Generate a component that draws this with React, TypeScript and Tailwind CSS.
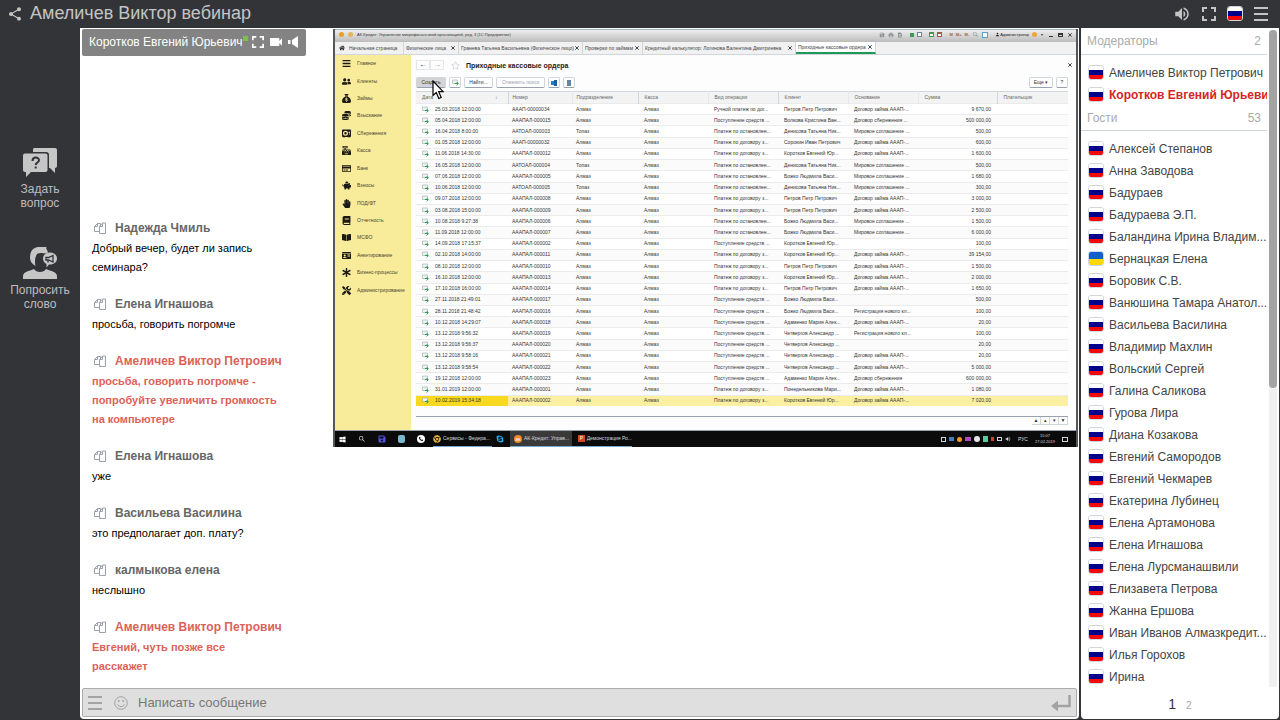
import React from 'react';
import { MdShare, MdVolumeUp, MdVideocam, MdPrint, MdSave, MdFindInPage, MdSearch, MdPerson } from 'react-icons/md';
import {
  FaBars, FaUserFriends, FaCoins, FaCashRegister, FaRegCreditCard, FaPiggyBank,
  FaHandPaper, FaBook, FaBookOpen, FaIdCard, FaAsterisk, FaTools, FaWindows, FaSkype,
  FaSave, FaChrome, FaPhoneAlt, FaRegStar, FaHome,
} from 'react-icons/fa';
import { FaSackDollar, FaVault } from 'react-icons/fa6';

interface Guest {
  name: string;
  flag?: 'ru' | 'ua';
}

interface Message {
  author: string;
  text: string;
  moderator?: boolean;
}

const MESSAGES: Message[] = [
  { author: 'Надежда Чмиль', text: 'Добрый вечер, будет ли запись семинара?' },
  { author: 'Елена Игнашова', text: 'просьба, говорить погромче' },
  { author: 'Амеличев Виктор Петрович', text: 'просьба, говорить погромче - попробуйте увеличить громкость на компьютере', moderator: true },
  { author: 'Елена Игнашова', text: 'уже' },
  { author: 'Васильева Василина', text: 'это предполагает доп. плату?' },
  { author: 'калмыкова елена', text: 'неслышно' },
  { author: 'Амеличев Виктор Петрович', text: 'Евгений, чуть позже все расскажет', moderator: true },
];

const GUESTS: Guest[] = [
  { name: 'Алексей Степанов' },
  { name: 'Анна Заводова' },
  { name: 'Бадураев' },
  { name: 'Бадураева Э.П.' },
  { name: 'Баландина Ирина Владим...' },
  { name: 'Бернацкая Елена', flag: 'ua' },
  { name: 'Боровик С.В.' },
  { name: 'Ванюшина Тамара Анатол...' },
  { name: 'Васильева Василина' },
  { name: 'Владимир Махлин' },
  { name: 'Вольский Сергей' },
  { name: 'Галина Саликова' },
  { name: 'Гурова Лира' },
  { name: 'Диана Козакова' },
  { name: 'Евгений Самородов' },
  { name: 'Евгений Чекмарев' },
  { name: 'Екатерина Лубинец' },
  { name: 'Елена Артамонова' },
  { name: 'Елена Игнашова' },
  { name: 'Елена Лурсманашвили' },
  { name: 'Елизавета Петрова' },
  { name: 'Жанна Ершова' },
  { name: 'Иван Иванов Алмазкредит...' },
  { name: 'Илья Горохов' },
  { name: 'Ирина' },
];

const SECTIONS = [
  { label: 'Главное', icon: FaBars },
  { label: 'Клиенты', icon: FaUserFriends },
  { label: 'Займы', icon: FaSackDollar },
  { label: 'Взыскание', icon: FaCoins },
  { label: 'Сбережения', icon: FaVault },
  { label: 'Касса', icon: FaCashRegister },
  { label: 'Банк', icon: FaRegCreditCard },
  { label: 'Взносы', icon: FaPiggyBank },
  { label: 'ПОД/ФТ', icon: FaHandPaper },
  { label: 'Отчетность', icon: FaBook },
  { label: 'МСФО', icon: FaBookOpen },
  { label: 'Анкетирование', icon: FaIdCard },
  { label: 'Бизнес-процессы', icon: FaAsterisk },
  { label: 'Администрирование', icon: FaTools },
];

const TABS = [
  { label: 'Физические лица', width: 'w-[55px]' },
  { label: 'Гранева Татьяна Васильевна (Физическое лицо)', width: 'w-[124px]' },
  { label: 'Проверки по займам', width: 'w-[60px]' },
  { label: 'Кредитный калькулятор: Логинова Валентина Дмитриевна', width: 'w-[153px]' },
  { label: 'Приходные кассовые ордера', width: 'w-[80px]', active: true },
];

const STOPPED = 'Платеж по остановлен...';
const CONTRACT = 'Платеж по договору з...';
const INCOME = 'Поступление средств ...';
const LOAN = 'Договор займа АААП-...';
const PEACE = 'Мировое соглашение ...';
const REGISTRATION = 'Регистрация нового кл...';
const PETROV = 'Петров Петр Петрович';
const DENISOVA = 'Денисова Татьяна Ник...';
const KOROTKOV = 'Коротков Евгений Юр...';
const BOZHKO = 'Божко Людмила Васи...';
const CHETVERGOV = 'Четвергов Александр ...';
const ADAMENKO = 'Адаменко Мария Алек...';

// date, number, department, operation, client, reason, sum
const ORDERS: string[][] = [
  ['25.03.2018 12:00:00', 'АААП-00000034', 'Алмаз', 'Ручной платеж по дог...', PETROV, LOAN, '9 670,00'],
  ['05.04.2018 12:00:00', 'АААПАЛ-000015', 'Алмаз', INCOME, 'Волкова Кристина Ван...', 'Договор сбережения ...', '500 000,00'],
  ['16.04.2018 8:00:00', 'ААТОАЛ-000003', 'Топаз', STOPPED, DENISOVA, PEACE, '500,00'],
  ['01.05.2018 12:00:00', 'АААП-00000032', 'Алмаз', CONTRACT, 'Сорокин Иван Петрович', LOAN, '600,00'],
  ['11.06.2018 14:30:00', 'АААПАЛ-000012', 'Алмаз', CONTRACT, KOROTKOV, LOAN, '1 600,00'],
  ['16.05.2018 12:00:00', 'ААТОАЛ-000004', 'Топаз', STOPPED, DENISOVA, PEACE, '500,00'],
  ['07.06.2018 12:00:00', 'АААПАЛ-000005', 'Алмаз', STOPPED, BOZHKO, PEACE, '1 680,00'],
  ['10.06.2018 12:00:00', 'ААТОАЛ-000005', 'Топаз', STOPPED, DENISOVA, PEACE, '300,00'],
  ['09.07.2018 12:00:00', 'АААПАЛ-000008', 'Алмаз', CONTRACT, PETROV, LOAN, '3 000,00'],
  ['03.08.2018 15:00:00', 'АААПАЛ-000009', 'Алмаз', CONTRACT, PETROV, LOAN, '2 500,00'],
  ['10.08.2018 9:27:38', 'АААПАЛ-000006', 'Алмаз', STOPPED, BOZHKO, PEACE, '1 500,00'],
  ['11.09.2018 12:00:00', 'АААПАЛ-000007', 'Алмаз', STOPPED, BOZHKO, PEACE, '6 000,00'],
  ['14.09.2018 17:15:37', 'АААПАЛ-000002', 'Алмаз', INCOME, KOROTKOV, '', '100,00'],
  ['02.10.2018 14:00:00', 'АААПАЛ-000011', 'Алмаз', CONTRACT, KOROTKOV, LOAN, '39 154,00'],
  ['08.10.2018 12:00:00', 'АААПАЛ-000010', 'Алмаз', CONTRACT, PETROV, LOAN, '1 500,00'],
  ['16.10.2018 12:00:00', 'АААПАЛ-000013', 'Алмаз', CONTRACT, KOROTKOV, LOAN, '2 000,00'],
  ['17.10.2018 16:00:00', 'АААПАЛ-000014', 'Алмаз', CONTRACT, PETROV, LOAN, '1 650,00'],
  ['27.11.2018 21:49:01', 'АААПАЛ-000017', 'Алмаз', INCOME, BOZHKO, '', '500,00'],
  ['28.11.2018 21:48:42', 'АААПАЛ-000016', 'Алмаз', INCOME, BOZHKO, REGISTRATION, '100,00'],
  ['10.12.2018 14:29:07', 'АААПАЛ-000018', 'Алмаз', INCOME, ADAMENKO, LOAN, '20,00'],
  ['13.12.2018 9:56:32', 'АААПАЛ-000019', 'Алмаз', INCOME, CHETVERGOV, REGISTRATION, '100,00'],
  ['13.12.2018 9:56:37', 'АААПАЛ-000020', 'Алмаз', INCOME, CHETVERGOV, '', '20,00'],
  ['13.12.2018 9:58:16', 'АААПАЛ-000021', 'Алмаз', INCOME, CHETVERGOV, LOAN, '20,00'],
  ['13.12.2018 9:58:54', 'АААПАЛ-000022', 'Алмаз', INCOME, CHETVERGOV, LOAN, '5 000,00'],
  ['19.12.2018 12:00:00', 'АААПАЛ-000023', 'Алмаз', INCOME, ADAMENKO, 'Договор сбережения', '600 000,00'],
  ['31.01.2019 12:00:00', 'АААПАЛ-000001', 'Алмаз', CONTRACT, 'Понедельникова Мари...', LOAN, '1 080,00'],
  ['10.02.2019 15:34:18', 'АААПАЛ-000002', 'Алмаз', CONTRACT, KOROTKOV, LOAN, '7 020,00'],
];

const Flag: React.FC<{ country?: 'ru' | 'ua' }> = ({ country = 'ru' }) => (
  <span className={`block w-4 h-[15px] mb-px shrink-0 rounded-[3px] overflow-hidden border ${country === 'ru' ? 'border-gray-300' : 'border-[#3a78c0]/30'}`}>
    <svg viewBox="0 0 14 13" className="block w-full h-full" preserveAspectRatio="none">
      {country === 'ru' ? (
        <>
          <rect width="14" height="4" fill="#fff" />
          <rect y="4" width="14" height="5" fill="#00008b" />
          <rect y="9" width="14" height="4" fill="#f20808" />
        </>
      ) : (
        <>
          <rect width="14" height="7" fill="#1560c8" />
          <rect y="7" width="14" height="6" fill="#ffd800" />
        </>
      )}
    </svg>
  </span>
);

const ExpandIcon: React.FC<{ className: string }> = ({ className }) => (
  <svg viewBox="0 0 14 14" className={className} fill="none" stroke="currentColor" strokeWidth="2">
    <path d="M1 5V1h4M9 1h4v4M13 9v4H9M5 13H1V9" />
  </svg>
);

const MenuIcon: React.FC<{ className: string }> = ({ className }) => (
  <svg viewBox="0 0 14 14" className={className} fill="currentColor">
    <path d="M0 0h14v2H0zM0 6h14v2H0zM0 12h14v2H0z" />
  </svg>
);

const CopyIcon = () => (
  <svg viewBox="0 0 12 12" className="w-3 h-3 text-gray-400" fill="none" stroke="currentColor" strokeWidth="1">
    <path d="M5 9.500H.5v-5l3-3h3v2.500M3.500 1.500v3h-3M5.500 11.500v-7l3-3.500h3v10.500zM8.500 1v3.500h-3" />
  </svg>
);

const QuestionIcon = () => (
  <svg viewBox="0 0 34 29" className="w-[34px] h-[29px]" fill="#c6c6c6">
    <path d="M11 0h21a2 2 0 0 1 2 2v16a2 2 0 0 1-2 2v5l-5-5h-1V7a3 3 0 0 0-3-3H10V1z" />
    <path d="M2 5.500h20.500a2 2 0 0 1 2 2V22a2 2 0 0 1-2 2H8l-5 5v-5H2a2 2 0 0 1-2-2V7.500a2 2 0 0 1 2-2z" />
    <path d="M9.500 13c0-4.500 6.500-4.300 6.500-.8 0 2.300-3.300 2.300-3.300 4.800M12.700 18.500v2" fill="none" stroke="#333438" strokeWidth="2" />
  </svg>
);

const SpeakerIcon = () => (
  <svg viewBox="0 0 34 32" className="w-[34px] h-8" fill="#c6c6c6">
    <path d="M7 11C7 3 11 0 16.500 0h7c-1 2 1 3 1.500 5.500l-2 1c-4-1-7-.5-9 .5-2 3-2.500 8-1.500 12C9 17 7 14 7 11z" />
    <path d="M0 32v-3c0-4 6-5 11-7 2 4 10 4 12 0 5 2 11 3 11 7v3z" />
    <path d="M27 5.500c4 0 7 2.500 7 6s-3 6-7 6h-1l-2.500 3v-3.500c-2.200-1-3.500-3-3.500-5.500 0-3.500 3-6 7-6z" />
    <path d="M23 10.500h2.500l4.500-2v6.500l-4.500-2H23zM25 13v2.500" fill="none" stroke="#333438" strokeWidth="1.300" />
  </svg>
);

const CloseMark = () => (
  <svg viewBox="0 0 4 4" className="w-1 h-1 shrink-0" fill="none" stroke="#444">
    <path d="M.3.3l3.400 3.400M3.700.3L.3 3.700" />
  </svg>
);

const DocIcon = () => (
  <svg viewBox="0 0 7 7" className="w-[7px] h-[7px] block">
    <path d="M.5 1h5v3.500h-5z" fill="#eef2f4" stroke="#9aa7ad" strokeWidth=".6" />
    <path d="M3 4.500h3M4.700 3l1.600 1.800-1.600 1.700" fill="none" stroke="#2f9e4c" strokeWidth="1" />
  </svg>
);

const ToolButton: React.FC<{ className?: string; label?: string; children?: React.ReactNode }> = ({ className = 'bg-white', label, children }) => (
  <button aria-label={label} className={`h-[11px] flex items-center justify-center whitespace-nowrap rounded-xs border border-gray-300 border-b-gray-400 ${className}`}>
    {children}
  </button>
);

const TopBar = () => (
  <header className="h-7 shrink-0 flex items-center pl-[7px] pr-3 text-[#c4c4c4]">
    <button aria-label="Поделиться"><MdShare className="w-4 h-4" /></button>
    <h1 className="ml-[7px] -mt-[3px] text-[18px] leading-6 whitespace-nowrap">Амеличев Виктор вебинар</h1>
    <div className="ml-auto flex items-center gap-[11px]">
      <button aria-label="Звук"><MdVolumeUp className="w-[18px] h-[18px]" /></button>
      <button aria-label="Во весь экран"><ExpandIcon className="w-3.5 h-3.5" /></button>
      <button aria-label="Язык"><Flag /></button>
      <button aria-label="Меню"><MenuIcon className="w-3.5 h-3.5" /></button>
    </div>
  </header>
);

const LeftRail = () => (
  <nav className="w-20 shrink-0 flex flex-col items-center gap-[37px] pt-[120px] text-xs leading-[14px] text-[#bdbdbd]">
    <button className="flex flex-col items-center gap-[5px]">
      <QuestionIcon />
      <span>Задать<br />вопрос</span>
    </button>
    <button className="flex flex-col items-center gap-1">
      <SpeakerIcon />
      <span>Попросить<br />слово</span>
    </button>
  </nav>
);

const Speaker = () => (
  <div className="mt-px ml-0.5 w-56 h-[27px] shrink-0 flex items-center rounded-xs bg-[#838383] pb-0.5 pl-[7px] text-xs text-white">
    <span className="whitespace-nowrap">Коротков Евгений Юрьевич</span>
    <span className="w-[5px] h-[5px] mb-1.5 shrink-0 bg-[#7cc242]" />
    <div className="ml-1 flex items-center gap-1">
      <button aria-label="Развернуть"><ExpandIcon className="w-3 h-3" /></button>
      <button aria-label="Камера"><MdVideocam className="w-4 h-4" /></button>
      <button aria-label="Громкость">
        <svg viewBox="0 0 10 12" className="w-2.5 h-3" fill="currentColor">
          <path d="M10 0v12L4 8V4zM0 4h2.500v4H0z" />
        </svg>
      </button>
    </div>
  </div>
);

const Chat = () => (
  <section className="w-[253px] shrink-0 flex flex-col">
    <Speaker />
    <div className="flex-1 min-h-0 overflow-hidden flex flex-col justify-end gap-[18px] px-3 pb-3">
      {MESSAGES.map((m, idx) => (
        <article key={idx} className={m.moderator ? 'text-[#dc6259] font-bold' : 'text-black'}>
          <h3 className={`h-5 flex items-center gap-[9px] pl-0.5 pb-0.5 text-xs font-bold whitespace-nowrap ${m.moderator ? '' : 'text-[#666]'}`}>
            <button aria-label="Копировать"><CopyIcon /></button>
            <span>{m.author}</span>
          </h3>
          <p className="w-[190px] text-[11px] leading-[19px]">{m.text}</p>
        </article>
      ))}
    </div>
  </section>
);

const WindowTitle = () => (
  <div className="h-[13px] flex items-center border-t border-[#9fb4bd] bg-linear-to-b from-[#eeeeee] to-[#bcbcbc] px-1 pb-[3px] gap-1 text-[4px] text-[#333]">
    <span className="w-[5px] h-[5px] rounded-full bg-[#e8a020]" />
    <span className="w-[5px] h-[5px] rounded-full bg-[#e3b458]" />
    <span className="whitespace-nowrap">АК-Кредит: Управление микрофинансовой организацией, ред. 3 (1С:Предприятие)</span>
    <div className="ml-auto flex items-center gap-[3px] text-[#8b8f94]">
      <MdSave className="w-1.5 h-1.5" />
      <MdPrint className="w-1.5 h-1.5" />
      <MdFindInPage className="w-1.5 h-1.5" />
      <span className="w-1 h-1 ml-1 bg-[#3c9a55]" />
      <span className="w-[5px] h-[5px] border border-[#6d8795] bg-white" />
      <span className="w-[5px] h-[5px] ml-1 border border-t-2 border-[#3c9a55] bg-white" />
      <span className="w-[5px] h-[5px] border border-t-2 border-[#a7583c] bg-white" />
      <span className="ml-1 font-bold text-[#a0603c]">M</span>
      <span className="font-bold text-[#a0603c]">M+</span>
      <span className="font-bold text-[#a0603c]">M-</span>
      <MdSearch className="w-[7px] h-[7px]" />
      <span className="w-1.5 h-1.5 border border-[#5c9fc9] bg-white" />
      <span className="ml-1 flex items-center text-[#222]"><MdPerson className="w-[5px] h-[5px]" />Администратор</span>
      <span className="w-[5px] h-[5px] rounded-full bg-[#eda73a]" />
      <span className="w-1 text-center leading-none text-[#333]">▾</span>
      <span className="w-1 h-px mt-1 mx-0.5 bg-[#333]" />
      <span className="w-[5px] h-1 border border-t-2 border-[#333]" />
      <span className="ml-0.5"><CloseMark /></span>
    </div>
  </div>
);

const WindowTabs = () => (
  <div className="h-[13px] flex border-b border-gray-300 bg-[#f1f1f1] text-[#444]">
    <button className="w-[69px] flex items-center gap-1 pl-1 border-r border-gray-300 whitespace-nowrap">
      <FaHome className="w-1.5 h-1.5 text-[#333]" />
      Начальная страница
    </button>
    {TABS.map(tab => (
      <button
        key={tab.label}
        className={`${tab.width} flex items-center justify-between pl-0.5 pr-[3px] border-r border-gray-300 whitespace-nowrap ${tab.active ? 'bg-white border-b-2 border-b-[#1d9a58]' : ''}`}
      >
        <span>{tab.label}</span>
        <CloseMark />
      </button>
    ))}
  </div>
);

const SectionList = () => (
  <nav className="w-[76px] shrink-0 bg-[#f8eb9a] text-[#4a4634]">
    <div className="h-[244px] flex flex-col">
      {SECTIONS.map(({ label, icon: Icon }) => (
        <button key={label} className="flex-1 min-h-0 flex items-center gap-1.5 pl-[7px] whitespace-nowrap">
          <Icon className="w-[9px] h-[9px] shrink-0 text-[#1c1a12]" />
          {label}
        </button>
      ))}
    </div>
  </nav>
);

const OrdersTable = () => (
  <table className="w-full h-[315px] table-fixed border-collapse text-left whitespace-nowrap">
    <thead>
      <tr className="h-3 bg-[#f3f3f3] border-t border-gray-300 text-[#666]">
        <th className="w-[92px] font-normal pl-1.5 border-r border-gray-300">
          <span className="flex justify-between pr-2.5"><span>Дата</span><span>↓</span></span>
        </th>
        <th className="w-16 font-normal pl-1 border-r border-gray-200">Номер</th>
        <th className="w-[66px] font-normal pl-1 border-r border-gray-300">Подразделение</th>
        <th className="w-[70px] font-normal pl-1.5 border-r border-gray-200">Касса</th>
        <th className="w-[70px] font-normal pl-1.5 border-r border-gray-300">Вид операции</th>
        <th className="w-[70px] font-normal pl-1.5 border-r border-gray-200">Клиент</th>
        <th className="w-[70px] font-normal pl-1.5 border-r border-gray-200">Основание</th>
        <th className="w-[79px] font-normal pl-1.5 border-r border-gray-300">Сумма</th>
        <th className="font-normal pl-1.5">Плательщик</th>
      </tr>
    </thead>
    <tbody>
      {ORDERS.map(([date, number, department, operation, client, reason, sum], idx) => {
        const selected = idx === ORDERS.length - 1;
        return (
          <tr key={idx} className={`border-t border-[#ebebeb] ${selected ? 'bg-[#fbf0a2]' : idx % 2 ? 'bg-[#fbfbfb]' : 'bg-white'}`}>
            <td className={`pl-1.5 ${selected ? 'bg-[#f9d91f]' : ''}`}>
              <span className="flex items-center gap-1.5"><DocIcon />{date}</span>
            </td>
            <td className="pl-1">{number}</td>
            <td className="pl-1">{department}</td>
            <td className="pl-1.5">Алмаз</td>
            <td className="pl-1.5">{operation}</td>
            <td className="pl-1.5">{client}</td>
            <td className="pl-1.5">{reason}</td>
            <td className="pr-1.5 text-right">{sum}</td>
            <td></td>
          </tr>
        );
      })}
    </tbody>
  </table>
);

const OrdersForm = () => (
  <div className="flex-1 min-w-0 bg-[#fdfdfd] pl-[5px] pr-2 pt-[3px] pb-[5px] text-[#333]">
    <div className="h-3.5 flex items-center text-[#444]">
      <button aria-label="Назад" className="w-3.5 h-2.5 border border-gray-200 text-[8px] leading-none">←</button>
      <button aria-label="Вперед" className="w-3.5 h-2.5 border border-gray-200 text-[8px] leading-none text-gray-400">→</button>
      <FaRegStar className="w-[9px] h-[9px] ml-[7px] text-gray-300" />
      <h2 className="ml-1.5 text-[7px] leading-none font-bold text-[#222] whitespace-nowrap">Приходные кассовые ордера</h2>
      <button aria-label="Закрыть" className="ml-auto -mr-1"><CloseMark /></button>
    </div>
    <div className="mt-[5px] mb-[3px] flex items-center gap-[3px]">
      <div className="relative">
        <ToolButton className="w-[30px] bg-[#d4d4d4]">Создать</ToolButton>
        <svg viewBox="0 0 12 20" className="absolute left-4 top-[3px] w-3 h-5" fill="#fff" stroke="#000" strokeWidth="1.200">
          <path d="M1 1v14.500l3.300-3 2.500 6 2.400-1-2.500-5.800h4.500z" />
        </svg>
      </div>
      <ToolButton label="Создать копированием" className="w-3 bg-white"><DocIcon /></ToolButton>
      <ToolButton className="w-[29px] bg-white">Найти...</ToolButton>
      <ToolButton className="w-[49px] bg-white text-gray-400">Отменить поиск</ToolButton>
      <ToolButton label="Движения" className="w-3 bg-white">
        <span className="w-[3px] h-1 bg-[#2a7fc0]" /><span className="w-[3px] h-1.5 bg-[#1d5f9c]" />
      </ToolButton>
      <ToolButton label="Отчет" className="w-3 bg-white"><span className="w-1 h-1.5 bg-[#5f88a8]" /></ToolButton>
      <ToolButton className="w-6 ml-auto bg-white">Еще ▾</ToolButton>
      <ToolButton className="w-3 bg-white">?</ToolButton>
    </div>
    <OrdersTable />
    <div className="mt-2.5 flex justify-end border-t border-gray-400">
      {['▲', '▴', '▾', '▼'].map(mark => (
        <button key={mark} className="w-[9px] h-2 border-r border-b border-gray-300 leading-none">{mark}</button>
      ))}
    </div>
  </div>
);

const Taskbar = () => (
  <div className="h-4 flex items-center bg-[#0b0b0b] text-[#d8d8d8] whitespace-nowrap">
    <div className="flex items-center gap-3 pl-1">
      <FaWindows className="w-[7px] h-[7px] text-white" />
      <MdSearch className="w-2 h-2" />
      <FaSave className="w-2 h-2 text-[#5353e0]" />
      <span className="w-[7px] h-2 rounded-xs bg-[#79b7cc]" />
      <span className="w-2 h-2 rounded-full bg-white flex items-center justify-center"><FaPhoneAlt className="w-1 h-1 text-black" /></span>
    </div>
    <div className="ml-2 h-full w-[59px] flex items-center gap-0.5 border-b border-[#77a7cd]">
      <FaChrome className="w-2 h-2 text-[#e2b33a]" />
      Сервисы - Федера...
    </div>
    <FaSkype className="w-2 h-2 ml-1 text-[#20a8e8]" />
    <div className="ml-1.5 pl-1 h-full w-[62px] flex items-center gap-0.5 bg-[#3a3a3a] border-b border-[#77a7cd]">
      <span className="w-2 h-2 rounded-full bg-[#ef8a2b] text-white leading-2 text-center">ак</span>
      АК-Кредит: Управ...
    </div>
    <div className="pl-1.5 h-full w-[60px] flex items-center gap-0.5 border-b border-[#77a7cd]">
      <span className="w-[7px] h-[7px] bg-[#d14424] text-white leading-[7px] text-center">P</span>
      Демонстрация Ро...
    </div>
    <div className="ml-auto mr-2 flex items-center gap-[3px]">
      <span className="w-[5px] h-[5px] border border-gray-300" />
      <span className="w-[5px] h-1 bg-[#3f7fbd]" />
      <span className="w-[5px] h-[5px] rounded-full bg-[#f09a2c]" />
      <span className="w-1.5 h-1 bg-[#b04ac0]" />
      <span className="w-1.5 h-1.5 rounded-full bg-gray-200" />
      <span className="w-[5px] h-1.5 bg-[#5fc79b]" />
      <span className="w-[3px] h-1 bg-[#d8402c]" />
      <span className="w-[5px] h-1 border border-gray-300" />
      <MdVolumeUp className="w-1.5 h-1.5" />
      <span className="ml-1">РУС</span>
      <span className="ml-1 text-center text-[4px] leading-[6px]">15:07<br />27.02.2019</span>
      <span className="ml-1 w-1.5 h-[5px] border border-gray-300" />
    </div>
  </div>
);

const SharedScreen = () => (
  <section className="flex-1 min-w-0 mr-px pt-px text-[5px] leading-[7px]">
    <div className="border-x-2 border-[#55585a]">
      <WindowTitle />
      <WindowTabs />
      <div className="flex border-b border-gray-400">
        <SectionList />
        <OrdersForm />
      </div>
      <Taskbar />
    </div>
  </section>
);

const MessageBar = () => (
  <form className="mx-0.5 mb-0.5 h-[29px] shrink-0 flex items-center gap-3 rounded-xs border border-[#acacac] bg-[#dfdfdf] px-[5px] text-[#a3a3a3]">
    <button type="button" aria-label="Меню чата"><MenuIcon className="w-3.5 h-3.5" /></button>
    <button type="button" aria-label="Смайлы">
      <svg viewBox="0 0 14 14" className="w-3.5 h-3.5" fill="none" stroke="currentColor">
        <circle cx="7" cy="7" r="6.300" />
        <path d="M3.500 8.300c1.200 3 5.800 3 7 0" />
        <circle cx="4.800" cy="5" r=".6" fill="currentColor" />
        <circle cx="9.200" cy="5" r=".6" fill="currentColor" />
      </svg>
    </button>
    <input aria-label="Сообщение" placeholder="Написать сообщение" className="flex-1 min-w-0 -ml-0.5 bg-transparent text-[13px] text-[#555] placeholder:text-[#777] outline-none" />
    <button type="submit" aria-label="Отправить">
      <svg viewBox="0 0 20 16" className="w-5 h-4" fill="none" stroke="currentColor" strokeWidth="2.500">
        <path d="M18.500 0v11H4" />
        <path d="M7 5.500v11L0 11z" fill="currentColor" stroke="none" />
      </svg>
    </button>
  </form>
);

const Participants = () => (
  <aside className="w-[198px] shrink-0 flex flex-col rounded-b-sm bg-white text-xs text-[#444]">
    <div className="flex-1 min-h-0 flex">
      <div className="flex-1 min-w-0 overflow-hidden">
        <h2 className="h-[27px] flex items-center justify-between px-1.5 border-b border-gray-300 text-[#aaa]">
          <span>Модераторы</span><span>2</span>
        </h2>
        <ul className="pt-[7px] pl-[7px]">
          <li className="h-[22px] flex items-center gap-[5px] whitespace-nowrap"><Flag />Амеличев Виктор Петрович</li>
          <li className="h-[22px] flex items-center gap-[5px] whitespace-nowrap font-bold text-[#d42626]"><Flag />Коротков Евгений Юрьевич</li>
        </ul>
        <h2 className="h-[25px] flex items-center justify-between px-1.5 border-b border-gray-300 text-[#aaa]">
          <span>Гости</span><span>53</span>
        </h2>
        <ul className="pt-[7px] pl-[7px]">
          {GUESTS.map(guest => (
            <li key={guest.name} className="h-[22px] flex items-center gap-[5px] whitespace-nowrap">
              <Flag country={guest.flag} />
              {guest.name}
            </li>
          ))}
        </ul>
      </div>
      <div className="w-2 ml-0.5 mr-0.5 mt-0.5 bg-[#f0f0f0]">
        <div className="h-[358px] rounded-full bg-[#a3a3a3]" />
      </div>
    </div>
    <div className="h-8 shrink-0 flex items-baseline justify-center gap-2.5 pt-[7px]">
      <button className="text-sm text-[#333]">1</button>
      <button className="text-[10px] text-[#aaa]">2</button>
    </div>
  </aside>
);

export default function App() {
  return (
    <div className="h-screen flex flex-col overflow-hidden bg-[#333438] font-['Liberation_Sans',Arial,sans-serif]">
      <TopBar />
      <div className="flex-1 min-h-0 flex pb-px pr-px">
        <LeftRail />
        <main className="flex-1 min-w-0 mr-0.5 flex flex-col rounded-b-sm bg-white">
          <div className="flex-1 min-h-0 flex">
            <Chat />
            <SharedScreen />
          </div>
          <MessageBar />
        </main>
        <Participants />
      </div>
    </div>
  );
}
